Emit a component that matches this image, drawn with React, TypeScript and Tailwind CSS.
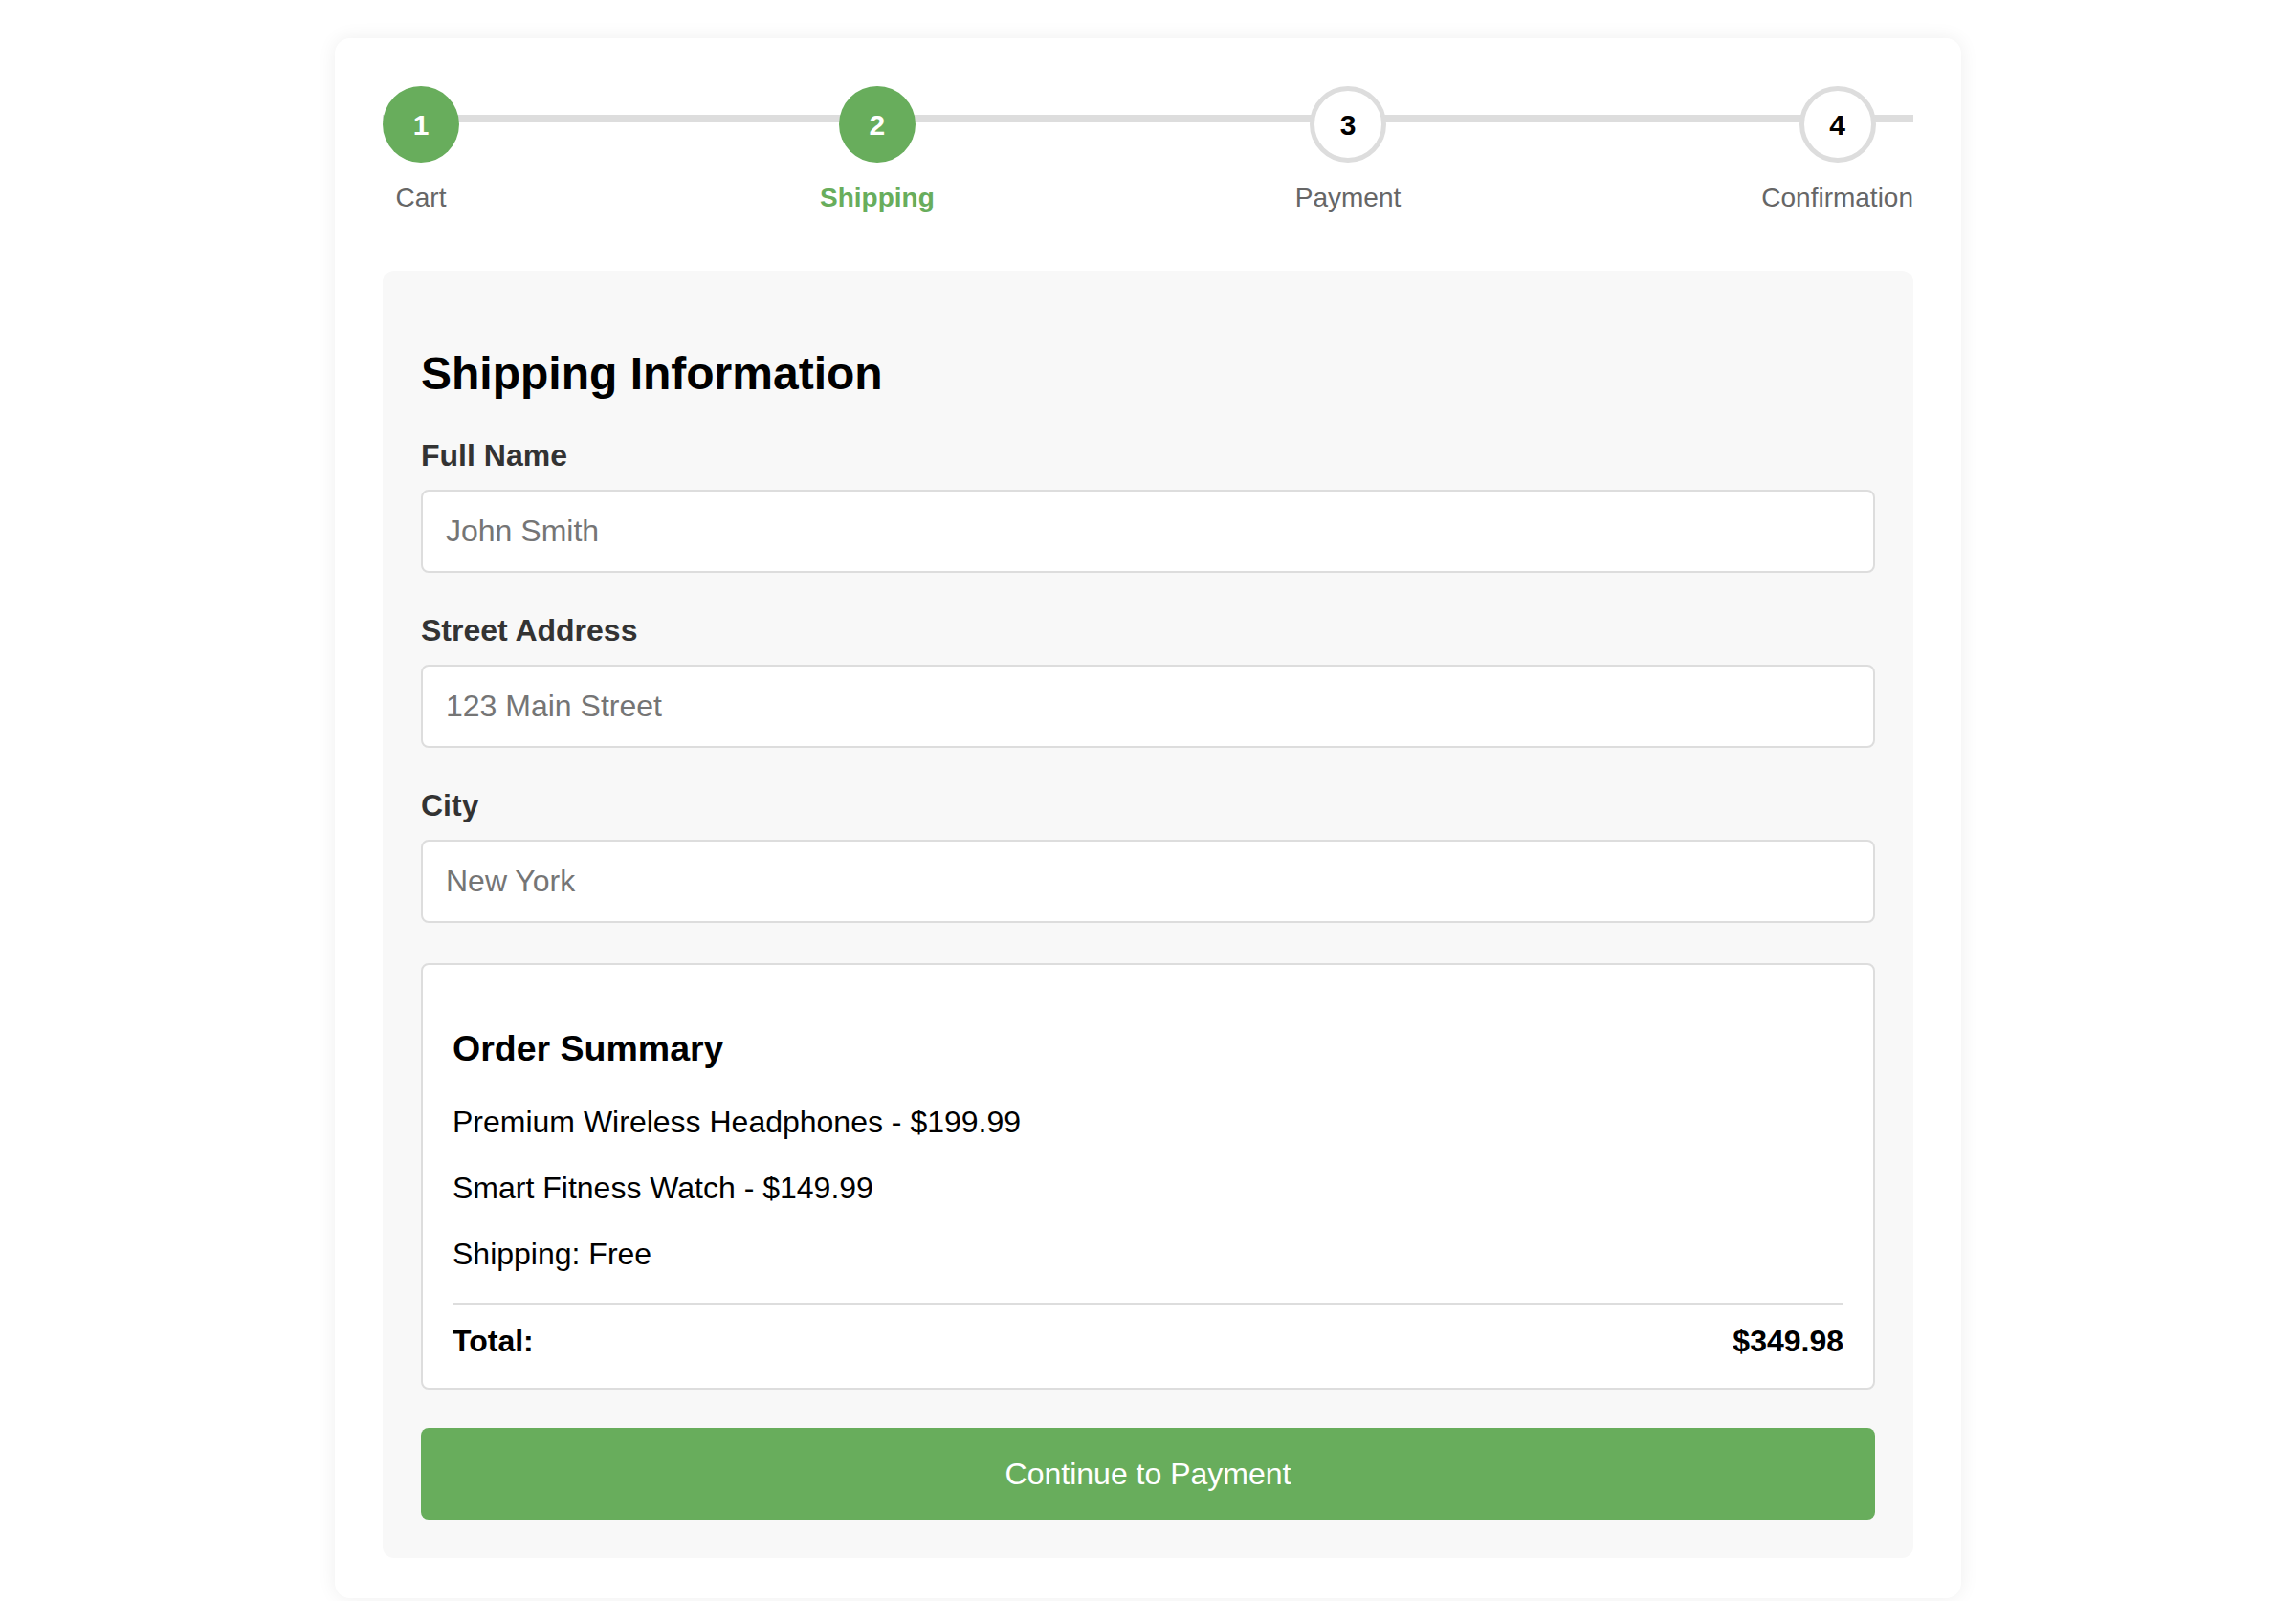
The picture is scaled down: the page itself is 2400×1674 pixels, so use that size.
import React from 'react'

const steps = [
    { n: 1, label: 'Cart', state: 'done' },
    { n: 2, label: 'Shipping', state: 'active' },
    { n: 3, label: 'Payment', state: 'todo' },
    { n: 4, label: 'Confirmation', state: 'todo' },
]

const fields = [
    { label: 'Full Name', placeholder: 'John Smith' },
    { label: 'Street Address', placeholder: '123 Main Street' },
    { label: 'City', placeholder: 'New York' },
]

const items = ['Premium Wireless Headphones - $199.99', 'Smart Fitness Watch - $149.99', 'Shipping: Free']

const Stepper: React.FC = () => {
    return (
        <div className="relative mb-[60px] flex justify-between">
            <div className="absolute left-0 right-0 top-[30px] h-[8px] bg-[#dddddd]" />
            {steps.map((s) => (
                <div key={s.n} className="relative z-10 flex flex-col items-center">
                    {s.state === 'todo' ? (
                        <div className="flex h-[80px] w-[80px] items-center justify-center rounded-full border-[5px] border-[#dddddd] bg-white text-[30px] font-bold text-black">
                            {s.n}
                        </div>
                    ) : (
                        <div className="flex h-[80px] w-[80px] items-center justify-center rounded-full bg-[#68ad5c] text-[30px] font-bold text-white">
                            {s.n}
                        </div>
                    )}
                    {s.state === 'active' ? (
                        <div className="mt-[21px] text-[28px] font-bold leading-[32px] text-[#68ad5c]">{s.label}</div>
                    ) : (
                        <div className="mt-[21px] text-[28px] leading-[32px] text-[#666666]">{s.label}</div>
                    )}
                </div>
            ))}
        </div>
    )
}

export default function App() {
    return (
        <div className="min-h-screen bg-white pt-[40px] font-['Liberation_Sans',Arial,sans-serif]">
            <div className="mx-auto w-[1700px] rounded-[16px] bg-white px-[50px] pt-[50px] pb-[42px] shadow-[0_0_20px_rgba(0,0,0,0.07)]">
                <Stepper />

                <div className="rounded-[12px] bg-[#f8f8f8] p-[40px]">
                    <h2 className="mt-[40px] mb-[40px] text-[48px] font-bold leading-[55px] text-black">Shipping Information</h2>

                    {fields.map((f) => (
                        <div key={f.label} className="mb-[42px]">
                            <label className="mb-[18px] block text-[32px] font-bold leading-[36px] text-[#333333]">{f.label}</label>
                            <input
                                type="text"
                                placeholder={f.placeholder}
                                className="block h-[87px] w-full rounded-[8px] border-2 border-[#dddddd] bg-white px-[24px] text-[32px] text-black outline-none placeholder:text-[#757575]"
                            />
                        </div>
                    ))}

                    <div className="rounded-[8px] border-2 border-[#dddddd] bg-white px-[31px] pt-[31px] pb-[31px]">
                        <h3 className="mt-[35px] mb-[38px] text-[37.5px] font-bold leading-[42px] text-black">Order Summary</h3>
                        <div className="flex flex-col gap-[33px]">
                            {items.map((it) => (
                                <p key={it} className="text-[32px] leading-[36px] text-black">{it}</p>
                            ))}
                        </div>
                        <div className="mt-[33px] flex justify-between border-t-2 border-[#dddddd] pt-[20px] text-[32px] font-bold leading-[36px] text-black">
                            <span>Total:</span>
                            <span>$349.98</span>
                        </div>
                    </div>

                    <button className="mt-[40px] h-[96px] w-full rounded-[8px] bg-[#68ad5c] text-[32px] text-white">
                        Continue to Payment
                    </button>
                </div>
            </div>
        </div>
    )
}
